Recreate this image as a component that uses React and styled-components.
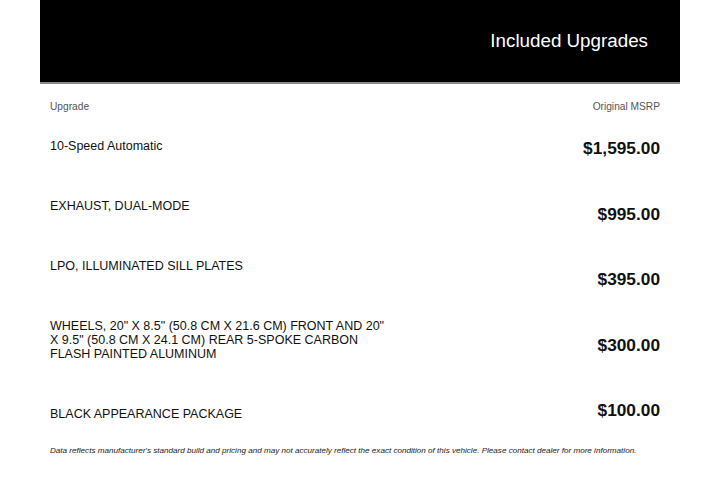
import React from "react";
import styled, { createGlobalStyle } from "styled-components";

const GlobalStyle = createGlobalStyle`
  body {
    margin: 0;
    background: #fff;
    font-family: "Liberation Sans", Arial, sans-serif;
  }
`;

const Sheet = styled.div`
  width: 640px;
  margin: 0 auto;
`;

const Banner = styled.header`
  height: 82px;
  background: #000;
  border-bottom: 2px solid #8a8a8a;
  display: flex;
  align-items: center;
  justify-content: flex-end;
  padding-right: 32px;
`;

const Title = styled.h1`
  margin: 0;
  color: #fff;
  font-size: 18.8px;
  font-weight: 400;
`;

const ColumnHeads = styled.div`
  display: flex;
  justify-content: space-between;
  padding: 16px 20px 0 10px;
  font-size: 10.2px;
  line-height: 13px;
  color: #555;
`;

const Table = styled.div`
  display: grid;
  grid-template-columns: 1fr auto;
  padding: 24px 20px 0 10px;
`;

const Column = styled.div`
  display: flex;
  flex-direction: column;
  align-items: ${(p) => (p.$end ? "flex-end" : "flex-start")};
  gap: ${(p) => p.$gap}px;
  padding-top: ${(p) => p.$offset || 0}px;
`;

const Label = styled.div`
  width: 338px;
  font-size: 12.5px;
  line-height: 14px;
  color: #111;
`;

const Price = styled.div`
  font-size: 17.3px;
  line-height: 22px;
  font-weight: 700;
  color: #111;
`;

const Disclaimer = styled.p`
  margin: 24px 0 0 10px;
  font-size: 8.1px;
  line-height: 11px;
  font-style: italic;
  color: #1a1a1a;
`;

const upgrades = [
  { name: "10-Speed Automatic", price: "$1,595.00" },
  { name: "EXHAUST, DUAL-MODE", price: "$995.00" },
  { name: "LPO, ILLUMINATED SILL PLATES", price: "$395.00" },
  {
    name: 'WHEELS, 20" X 8.5" (50.8 CM X 21.6 CM) FRONT AND 20" X 9.5" (50.8 CM X 24.1 CM) REAR 5-SPOKE CARBON FLASH PAINTED ALUMINUM',
    price: "$300.00",
  },
  { name: "BLACK APPEARANCE PACKAGE", price: "$100.00" },
];

export default function App() {
  return (
    <>
      <GlobalStyle />
      <Sheet>
        <Banner>
          <Title>Included Upgrades</Title>
        </Banner>
        <ColumnHeads>
          <span>Upgrade</span>
          <span>Original MSRP</span>
        </ColumnHeads>
        <Table>
          <Column $gap={46} $offset={2}>
            {upgrades.map((u) => (
              <Label key={u.name}>{u.name}</Label>
            ))}
          </Column>
          <Column $end $gap={43.5}>
            {upgrades.map((u) => (
              <Price key={u.name}>{u.price}</Price>
            ))}
          </Column>
        </Table>
        <Disclaimer>
          Data reflects manufacturer's standard build and pricing and may not
          accurately reflect the exact condition of this vehicle. Please
          contact dealer for more information.
        </Disclaimer>
      </Sheet>
    </>
  );
}
